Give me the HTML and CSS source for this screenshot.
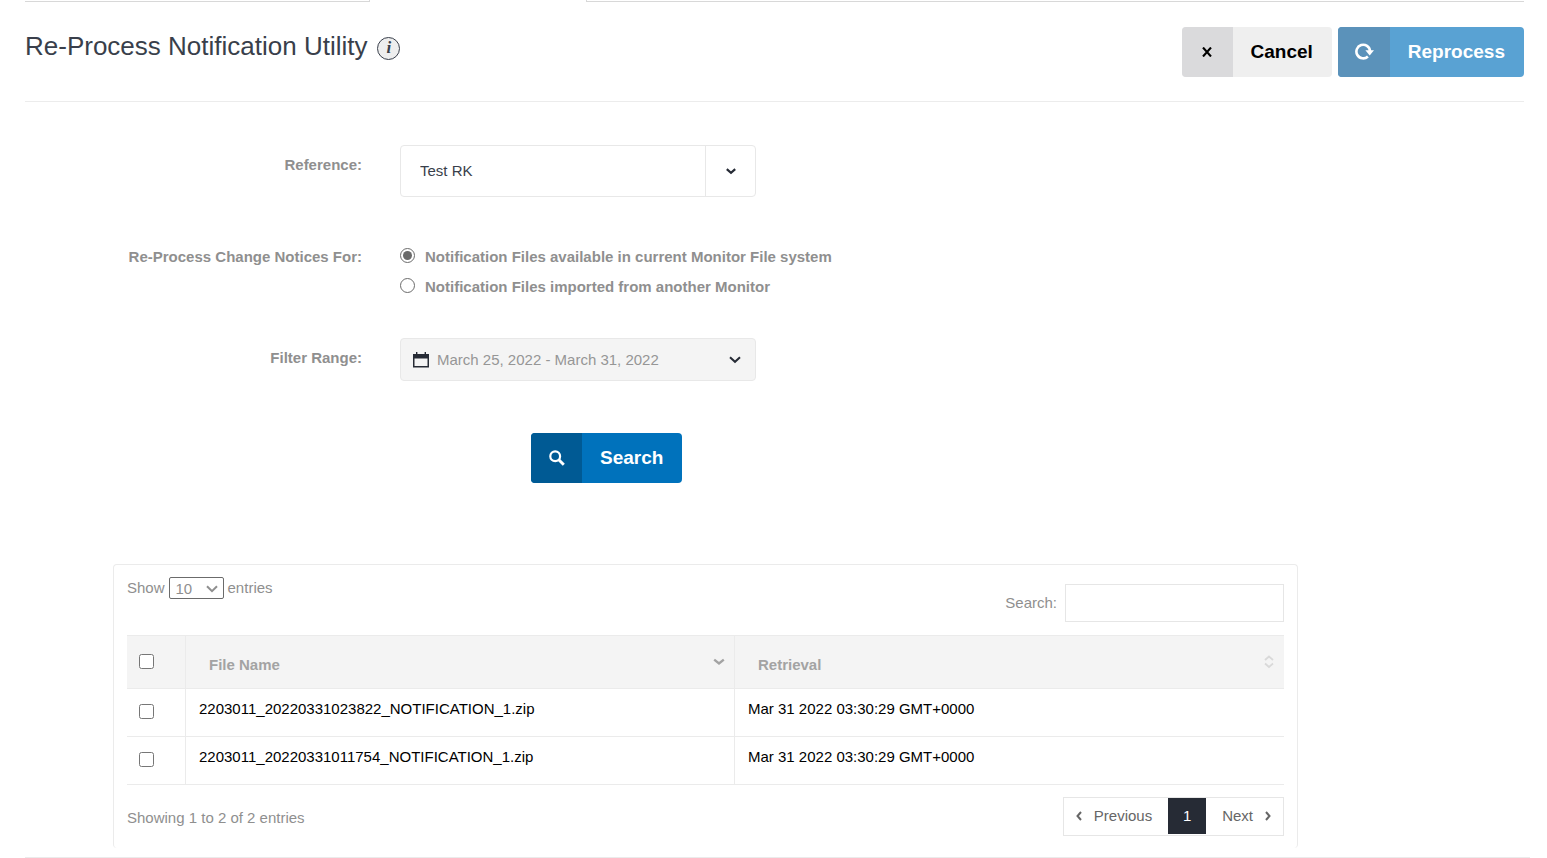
FILE: index.html
```html
<!DOCTYPE html>
<html lang="en">
<head>
<meta charset="utf-8">
<title>Re-Process Notification Utility</title>
<link rel="stylesheet" href="styles.css">
</head>
<body>
<div class="tab-edge"><span class="tab-edge-left"></span><span class="tab-edge-right"></span></div>
<main class="page">
  <header class="page-header">
    <h1 class="title">Re-Process Notification Utility <span class="info">i</span></h1>
    <div class="actions">
      <button type="button" class="btn btn-cancel">
        <span class="btn-icon"><svg width="10" height="10" viewBox="0 0 10 10"><path d="M1 0.5L9 9.5M9 0.5L1 9.5" fill="none" stroke="currentColor" stroke-width="2.1"/></svg></span>
        <span class="btn-text">Cancel</span>
      </button>
      <button type="button" class="btn btn-reprocess">
        <span class="btn-icon"><svg width="20" height="18" viewBox="0 0 20 18"><path d="M13.9 13.5A6.8 6.8 0 1 1 16 8" fill="none" stroke="currentColor" stroke-width="2.6"/><path d="M11.4 7.2H20L15.7 12.4Z" fill="currentColor"/></svg></span>
        <span class="btn-text">Reprocess</span>
      </button>
    </div>
  </header>

  <form class="form">
    <div class="row">
      <label class="label" for="reference">Reference:</label>
      <div class="select-box">
        <select id="reference" class="select"><option>Test RK</option></select>
        <span class="select-arrow"><svg width="10" height="7" viewBox="0 0 10 7"><path d="M0.8 1.2L5 4.8L9.2 1.2" fill="none" stroke="currentColor" stroke-width="2.2"/></svg></span>
      </div>
    </div>
    <div class="row row-radio">
      <span class="label" id="source-label">Re-Process Change Notices For:</span>
      <div class="radios" role="radiogroup" aria-labelledby="source-label">
        <label class="radio"><input type="radio" name="source" checked>Notification Files available in current Monitor File system</label>
        <label class="radio"><input type="radio" name="source">Notification Files imported from another Monitor</label>
      </div>
    </div>
    <div class="row row-range">
      <label class="label" for="range">Filter Range:</label>
      <button type="button" id="range" class="range">
        <svg width="16" height="16" viewBox="0 0 16 16"><path d="M3 0H4.4V2H11.6V0H13V2H16V15.5H0V2H3ZM1.5 6.5V14H14.5V6.5Z" fill="currentColor" fill-rule="evenodd"/></svg>
        <span class="range-text">March 25, 2022 - March 31, 2022</span>
        <svg width="12" height="8" viewBox="0 0 12 8"><path d="M1 1.2L6 5.8L11 1.2" fill="none" stroke="currentColor" stroke-width="2"/></svg>
      </button>
    </div>
    <div class="submit">
      <button type="button" class="btn btn-search">
        <span class="btn-icon"><svg width="16" height="16" viewBox="0 0 16 16"><circle cx="6.2" cy="6.2" r="4.9" fill="none" stroke="currentColor" stroke-width="2.2"/><path d="M9.8 9.8L14.8 14.8" fill="none" stroke="currentColor" stroke-width="2.9"/></svg></span>
        <span class="btn-text">Search</span>
      </button>
    </div>
  </form>

  <section class="panel">
    <div class="tools">
      <div class="length">
        <label for="length">Show</label>
        <span class="length-box">
          <select id="length" class="length-select"><option>10</option><option>25</option></select>
          <svg class="length-arrow" width="12" height="8" viewBox="0 0 12 8"><path d="M1 1.2L6 6.2L11 1.2" fill="none" stroke="currentColor" stroke-width="2"/></svg>
        </span>
        <span>entries</span>
      </div>
      <label class="filter">Search:<input type="search" class="filter-input"></label>
    </div>
    <table class="files">
      <thead>
        <tr>
          <th class="col-check"><input type="checkbox" aria-label="Select all files"></th>
          <th><div class="head">File Name<svg width="12" height="14" viewBox="0 0 12 14"><path d="M1.2 4.6L6 8.4L10.8 4.6" fill="none" stroke="#a3a3a3" stroke-width="2.4"/></svg></div></th>
          <th><div class="head">Retrieval<svg width="12" height="14" viewBox="0 0 12 14"><path d="M2 5L6 1.5L10 5M2 8.5L6 12L10 8.5" fill="none" stroke="#d9d9d9" stroke-width="1.8"/></svg></div></th>
        </tr>
      </thead>
      <tbody>
        <tr>
          <td class="col-check"><input type="checkbox" aria-label="Select first file"></td>
          <td>2203011_20220331023822_NOTIFICATION_1.zip</td>
          <td>Mar 31 2022 03:30:29 GMT+0000</td>
        </tr>
        <tr>
          <td class="col-check"><input type="checkbox" aria-label="Select second file"></td>
          <td>2203011_20220331011754_NOTIFICATION_1.zip</td>
          <td>Mar 31 2022 03:30:29 GMT+0000</td>
        </tr>
      </tbody>
    </table>
    <div class="foot">
      <span class="summary">Showing 1 to 2 of 2 entries</span>
      <nav class="pager">
        <a href="#" class="pager-link"><svg width="6" height="10" viewBox="0 0 6 10"><path d="M5 1L1.5 5L5 9" fill="none" stroke="currentColor" stroke-width="2"/></svg>Previous</a>
        <a href="#" class="pager-current">1</a>
        <a href="#" class="pager-link">Next<svg width="6" height="10" viewBox="0 0 6 10"><path d="M1 1L4.5 5L1 9" fill="none" stroke="currentColor" stroke-width="2"/></svg></a>
      </nav>
    </div>
  </section>
</main>
<div class="page-end"></div>
</body>
</html>
```
FILE: styles.css
```css
* { box-sizing: border-box; }
body {
  margin: 0;
  background: #fff;
  color: #8f8f8f;
  font: 15px/20px "Liberation Sans", Arial, sans-serif;
}
svg { display: block; flex: none; }
button, input, select { font: inherit; }

.tab-edge {
  display: flex;
  justify-content: space-between;
  height: 2px;
  margin: 0 23px 0 25px;
}
.tab-edge-left { width: 23%; border: solid #d8d8d8; border-width: 0 1px 1px 0; }
.tab-edge-right { width: 62.6%; border: solid #d8d8d8; border-width: 0 0 1px 1px; }

.page { margin: 0 23px 0 25px; }
.page-header {
  display: flex;
  justify-content: space-between;
  padding: 25px 0 24px;
  border-bottom: 1px solid #ececec;
}
.title {
  display: flex;
  align-items: center;
  gap: 10px;
  height: 38px;
  margin: 0;
  color: #393f4b;
  font-size: 26px;
  font-weight: 400;
  line-height: 38px;
}
.info {
  width: 23px;
  height: 23px;
  margin-top: 4px;
  border: 1px solid #393f4b;
  border-radius: 50%;
  background: #eee;
  font: italic bold 17px/20px "Liberation Serif", serif;
  text-align: center;
}
.actions { display: flex; gap: 6px; }

.btn {
  display: flex;
  height: 50px;
  padding: 0;
  border: 0;
  border-radius: 4px;
  overflow: hidden;
  font-size: 19px;
  font-weight: 700;
  line-height: 50px;
}
.btn-icon {
  display: flex;
  align-items: center;
  justify-content: center;
  width: 51px;
  height: 50px;
}
.btn-text { padding: 0 19px 0 18px; }
.btn-cancel { background: #efefef; color: #000; }
.btn-cancel .btn-icon { background: #dadadc; }
.btn-reprocess { background: #59a2d3; color: #fff; }
.btn-reprocess .btn-icon { width: 52px; background: #5b92ba; }
.btn-search { background: #0072bc; color: #fff; }
.btn-search .btn-icon { background: #005a94; }

.form { padding-top: 43px; }
.row {
  display: grid;
  grid-template-columns: 337fr 1124fr;
  gap: 38px;
  align-items: start;
}
.label { padding-top: 10px; font-weight: 700; text-align: right; }
.row-radio { margin-top: 45px; }
.row-radio .label { padding-top: 5px; }
.row-range { margin-top: 36px; }

.select-box {
  display: flex;
  position: relative;
  width: 356px;
  height: 52px;
  border: 1px solid #e8e8e8;
  border-radius: 4px;
}
.select {
  width: 100%;
  padding: 0 70px 0 19px;
  border: 0;
  border-radius: 4px;
  background: transparent;
  color: #393f4b;
  appearance: none;
}
.select-arrow {
  position: absolute;
  top: 0;
  right: 0;
  bottom: 0;
  display: flex;
  align-items: center;
  justify-content: center;
  width: 50px;
  border-left: 1px solid #e8e8e8;
  color: #262b35;
  pointer-events: none;
}
.radio {
  display: flex;
  align-items: flex-start;
  gap: 10px;
  font-weight: 700;
  line-height: 30px;
}
.radio input {
  display: grid;
  place-items: center;
  width: 15px;
  height: 15px;
  margin: 6px 0 0;
  border: 1px solid #6b6b6b;
  border-radius: 50%;
  background: #fff;
  appearance: none;
}
.radio input:checked::before {
  content: "";
  width: 9px;
  height: 9px;
  border-radius: 50%;
  background: #6b6b6b;
}
.range {
  display: flex;
  align-items: center;
  gap: 8px;
  width: 356px;
  height: 43px;
  padding: 0 14px 0 12px;
  border: 1px solid #e8e8e8;
  border-radius: 4px;
  background: #f4f4f4;
  color: #262b35;
  text-align: left;
}
.range-text { flex: 1; color: #969696; }
.submit { display: flex; padding: 52px 0 81px 506px; }

.panel {
  margin: 0 226px 0 88px;
  padding: 12px 13px;
  border: solid #ebebeb;
  border-width: 1px 1px 0;
  border-radius: 4px;
}
.tools { display: flex; justify-content: space-between; align-items: flex-start; }
.length { display: flex; gap: 4px; line-height: 22px; }
.length-box { display: flex; position: relative; }
.length-select {
  width: 55px;
  height: 22px;
  padding: 0 6px;
  border: 1px solid #6b6b6b;
  border-radius: 2px;
  background: #fff;
  color: #8f8f8f;
  appearance: none;
}
.length-arrow { position: absolute; top: 8px; right: 6px; pointer-events: none; }
.filter { display: flex; align-items: center; gap: 8px; padding: 7px 0 13px; }
.filter-input {
  width: 219px;
  height: 38px;
  padding: 0 10px;
  border: 1px solid #e6e6e6;
  border-radius: 0;
  background: #fff;
}

.files { width: 100%; border-collapse: separate; border-spacing: 0; table-layout: fixed; }
.files th, .files td {
  padding: 10px 13px 17px;
  border-right: 1px solid #ebebeb;
  border-bottom: 1px solid #ebebeb;
  text-align: left;
  vertical-align: top;
}
.files th:last-child, .files td:last-child { border-right: 0; }
.files th {
  padding: 19px 9px 13px 23px;
  border-top: 1px solid #ebebeb;
  background: #f4f4f4;
  color: #a3a3a3;
}
.files td { color: #000; }
.files .col-check { width: 59px; padding-left: 12px; }
.col-check input { display: block; width: 15px; height: 15px; margin: 5px 0 0; }
.files th input { margin-top: -1px; }
.head { display: flex; justify-content: space-between; }

.foot { display: flex; justify-content: space-between; align-items: center; padding-top: 12px; }
.summary { padding-top: 3px; }
.pager { display: flex; height: 39px; border: 1px solid #e6e6e6; line-height: 36px; }
.pager a { color: #666; text-decoration: none; }
.pager-link { display: flex; align-items: center; gap: 12px; height: 36px; padding: 0 12px 0 16px; }
.pager-link:first-child { padding: 0 16px 0 12px; }
.pager .pager-current { width: 38px; height: 36px; background: #262b35; color: #fff; text-align: center; }
.page-end { margin: 9px 17px 0 25px; border-top: 1px solid #ebebeb; }
```
